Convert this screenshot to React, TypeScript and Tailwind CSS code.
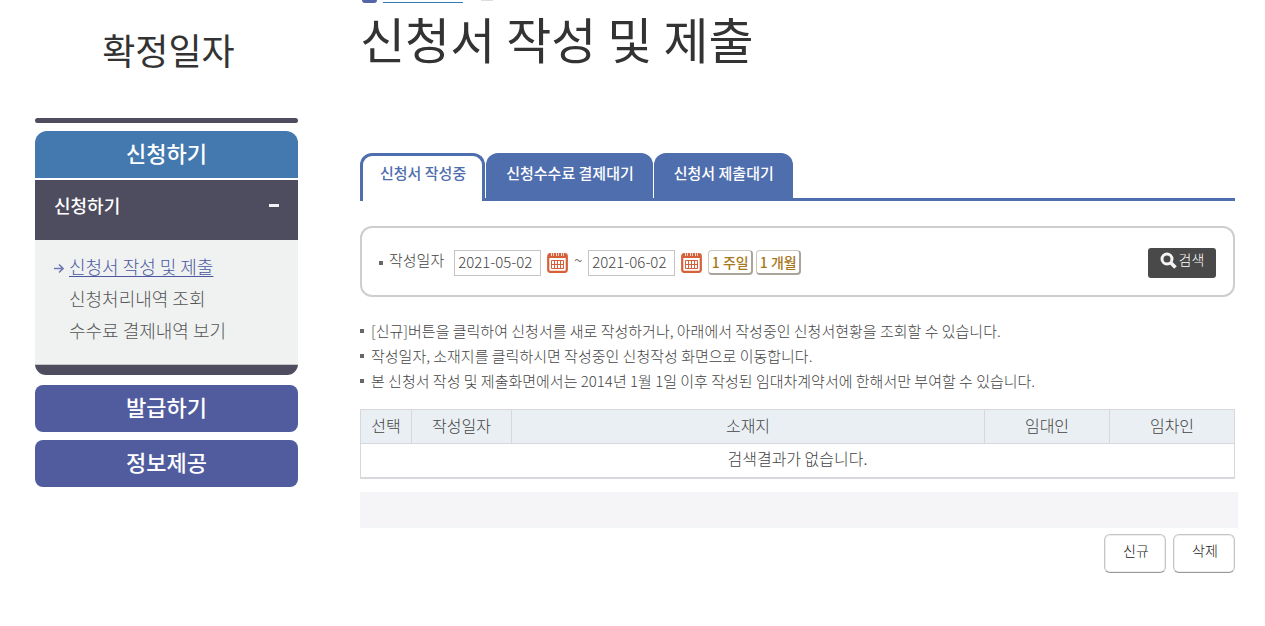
import { useState } from 'react'

const tabs = ['신청서 작성중', '신청수수료 결제대기', '신청서 제출대기']

const notes = [
  '[신규]버튼을 클릭하여 신청서를 새로 작성하거나, 아래에서 작성중인 신청서현황을 조회할 수 있습니다.',
  '작성일자, 소재지를 클릭하시면 작성중인 신청작성 화면으로 이동합니다.',
  '본 신청서 작성 및 제출화면에서는 2014년 1월 1일 이후 작성된 임대차계약서에 한해서만 부여할 수 있습니다.',
]

const CalendarIcon = () => (
  <svg width="21" height="21" viewBox="0 0 21 21" fill="none" aria-hidden="true">
    <rect x="1.200" y="2.200" width="18.600" height="17.600" rx="2" fill="#fff" stroke="#d6603a" strokeWidth="2.200" />
    <path d="M2 2.500h17V6H2z" fill="#d6603a" />
    <path d="M4 0h3v4H4zM9 0h3v4H9zM14 0h3v4h-3z" fill="#fff" />
    <path d="M4.800 1h1.500v3H4.800zM9.800 1h1.500v3H9.800zM14.800 1h1.500v3h-1.500z" fill="#d6603a" />
    <path d="M4.500 8.500h12v8h-12zM7.500 8.500v8M10.500 8.500v8M13.500 8.500v8M4.500 12.500h12" stroke="#d6603a" />
  </svg>
)

const SearchIcon = () => (
  <svg width="17" height="17" viewBox="0 0 17 17" fill="none" stroke="#f4f4f4" aria-hidden="true">
    <circle cx="7" cy="7" r="5" strokeWidth="3" />
    <path d="M11 11l4.500 4.500" strokeWidth="3.500" />
  </svg>
)

const ArrowIcon = () => (
  <svg width="11" height="11" viewBox="0 0 11 11" fill="none" stroke="#7078b5" strokeWidth="1.600" aria-hidden="true">
    <path d="M1 5.500h9M6 1.500l4 4-4 4" />
  </svg>
)

const DateField = ({ id, label, value, onChange }) => (
  <>
    <input
      id={id}
      aria-label={label}
      value={value}
      onChange={(e) => onChange(e.target.value)}
      className="h-[26px] w-[87px] border border-[#c4c4c4] bg-white px-[3px] pb-0.5 text-[15px] font-light text-[#444]"
    />
    <button type="button" aria-label="달력" className="ml-1.5">
      <CalendarIcon />
    </button>
  </>
)

const PeriodButton = ({ children }) => (
  <button
    type="button"
    className="h-[25px] w-[45px] rounded-sm border border-r-2 border-b-2 border-[#cdc8bd] border-r-[#aaa59b] border-b-[#aaa59b] bg-white text-[14px] leading-5 font-medium whitespace-nowrap text-[#a8781c]"
  >
    {children}
  </button>
)

const Sidebar = () => (
  <aside className="w-[263px] shrink-0">
    <h2 className="pt-6 pl-1 text-center text-[36px] leading-[50px] text-[#333]">확정일자</h2>
    <nav className="pt-11">
      <div className="h-[5px] rounded-sm bg-[#4e4c5f]" />
      <a
        href="#apply"
        className="mt-2 block h-[47px] rounded-t-xl bg-[#4379af] text-center text-[22px] leading-[42px] font-medium text-white"
      >
        신청하기
      </a>
      <button
        type="button"
        className="mt-0.5 flex h-[60px] w-full items-start justify-between bg-[#4e4c5f] px-[19px] text-[18px] leading-[50px] font-medium text-white"
      >
        신청하기
        <span className="mt-6 h-[3px] w-2.5 bg-[#f3f3f5]" />
      </button>
      <ul className="h-[124px] bg-[#f0f2f2] pt-2.5 pl-[34px] text-[18px] leading-8 font-light text-[#555]">
        <li className="-ml-4 flex items-center gap-[5px] text-[#4b57a0]">
          <span className="pt-1">
            <ArrowIcon />
          </span>
          <a href="#write" className="underline underline-offset-2">
            신청서 작성 및 제출
          </a>
        </li>
        <li>
          <a href="#status">신청처리내역 조회</a>
        </li>
        <li>
          <a href="#payments">수수료 결제내역 보기</a>
        </li>
      </ul>
      <div className="h-[11px] rounded-b-xl border-t border-[#c8c8cc] bg-[#4e4c5f]" />
      <a
        href="#issue"
        className="mt-2.5 block h-[47px] rounded-lg bg-[#515c9f] text-center text-[22px] leading-[42px] font-medium text-white"
      >
        발급하기
      </a>
      <a
        href="#info"
        className="mt-2 block h-[47px] rounded-lg bg-[#515c9f] text-center text-[22px] leading-[42px] font-medium text-white"
      >
        정보제공
      </a>
    </nav>
  </aside>
)

export default function App() {
  const [active, setActive] = useState(0)
  const [from, setFrom] = useState('2021-05-02')
  const [to, setTo] = useState('2021-06-02')

  return (
    <div className="flex gap-[62px] bg-white pr-[30px] pl-[35px] font-['Noto_Sans_CJK_KR',sans-serif] text-[#444]">
      <Sidebar />
      <main className="min-w-0 flex-1">
        <div className="flex h-1 items-start" aria-hidden="true">
          <span className="ml-0.5 h-[3px] w-[15px] rounded-b-lg bg-[#5265a8]" />
          <span className="ml-1.5 h-[3px] w-20 border-b border-[#2f7dbb]" />
          <span className="ml-[18px] h-px w-3 bg-[#dddddd]" />
        </div>
        <h1 className="pt-0.5 text-[49px] leading-16 whitespace-nowrap text-[#333]">신청서 작성 및 제출</h1>

        <div role="tablist" className="mt-[83px] flex h-12 gap-px border-b-[3px] border-[#4f6eae]">
          {tabs.map((tab, i) => (
            <button
              key={tab}
              type="button"
              role="tab"
              aria-selected={active === i}
              onClick={() => setActive(i)}
              className={
                active === i
                  ? 'h-12 rounded-t-xl border-[3px] border-b-0 border-[#4f6eae] bg-white pr-4 pb-3 pl-[17px] text-[15px] leading-5 font-medium whitespace-nowrap text-[#4f6eae]'
                  : 'h-[45px] rounded-t-xl bg-[#4f6eae] pr-[19px] pb-1.5 pl-5 text-[15px] leading-5 font-medium whitespace-nowrap text-white'
              }
            >
              {tab}
            </button>
          ))}
        </div>

        <form
          onSubmit={(e) => e.preventDefault()}
          className="mt-[25px] flex h-[71px] items-center justify-between rounded-xl border-2 border-[#cecece] px-[17px] pt-0.5"
        >
          <div className="flex items-center text-[15px] font-light">
            <span className="mr-1.5 size-1 bg-[#666]" />
            <label htmlFor="date-from" className="mr-2.5 pb-1">
              작성일자
            </label>
            <DateField id="date-from" label="작성일자 시작" value={from} onChange={setFrom} />
            <span className="mx-1.5 pb-1">~</span>
            <DateField id="date-to" label="작성일자 종료" value={to} onChange={setTo} />
            <div className="ml-1.5 flex gap-[3px]">
              <PeriodButton>1 주일</PeriodButton>
              <PeriodButton>1 개월</PeriodButton>
            </div>
          </div>
          <button
            type="submit"
            className="flex h-[30px] w-[68px] items-center justify-center gap-0.5 rounded-[3px] bg-[#494949] pb-1 text-[14px] font-light text-white"
          >
            <SearchIcon />
            <span className="pb-0.5">검색</span>
          </button>
        </form>

        <ul className="mt-[21px] text-[15px] leading-[25px] font-light">
          {notes.map((note) => (
            <li key={note} className="flex items-center gap-[7px]">
              <span className="size-1 shrink-0 bg-[#666]" />
              {note}
            </li>
          ))}
        </ul>

        <table className="mt-4 w-full table-fixed border-collapse border border-b-2 border-[#d7d7dc] text-center text-[16px] font-light">
          <colgroup>
            <col className="w-[51px]" />
            <col className="w-[100px]" />
            <col />
            <col className="w-[125px]" />
            <col className="w-[125px]" />
          </colgroup>
          <thead>
            <tr className="h-[34px] bg-[#eaeff3]">
              {['선택', '작성일자', '소재지', '임대인', '임차인'].map((name) => (
                <th key={name} scope="col" className="border border-[#d7d7dc] pb-1 font-light">
                  {name}
                </th>
              ))}
            </tr>
          </thead>
          <tbody>
            <tr className="h-[34px]">
              <td colSpan={5} className="pb-1">
                검색결과가 없습니다.
              </td>
            </tr>
          </tbody>
        </table>

        <div className="mt-[13px] -mr-[3px] h-9 border border-[#f0f5fa] bg-[#f5f5f8]" />

        <div className="mt-1.5 flex justify-end gap-[7px] text-[14px] font-light text-[#222]">
          {['신규', '삭제'].map((name) => (
            <button
              key={name}
              type="button"
              className="h-[39px] w-[62px] rounded-md border border-[#c4c4c4] border-b-[#999] bg-white pb-1.5 pl-0.5 shadow-[inset_0_0_0_1px_#eeeeee]"
            >
              {name}
            </button>
          ))}
        </div>
      </main>
    </div>
  )
}
